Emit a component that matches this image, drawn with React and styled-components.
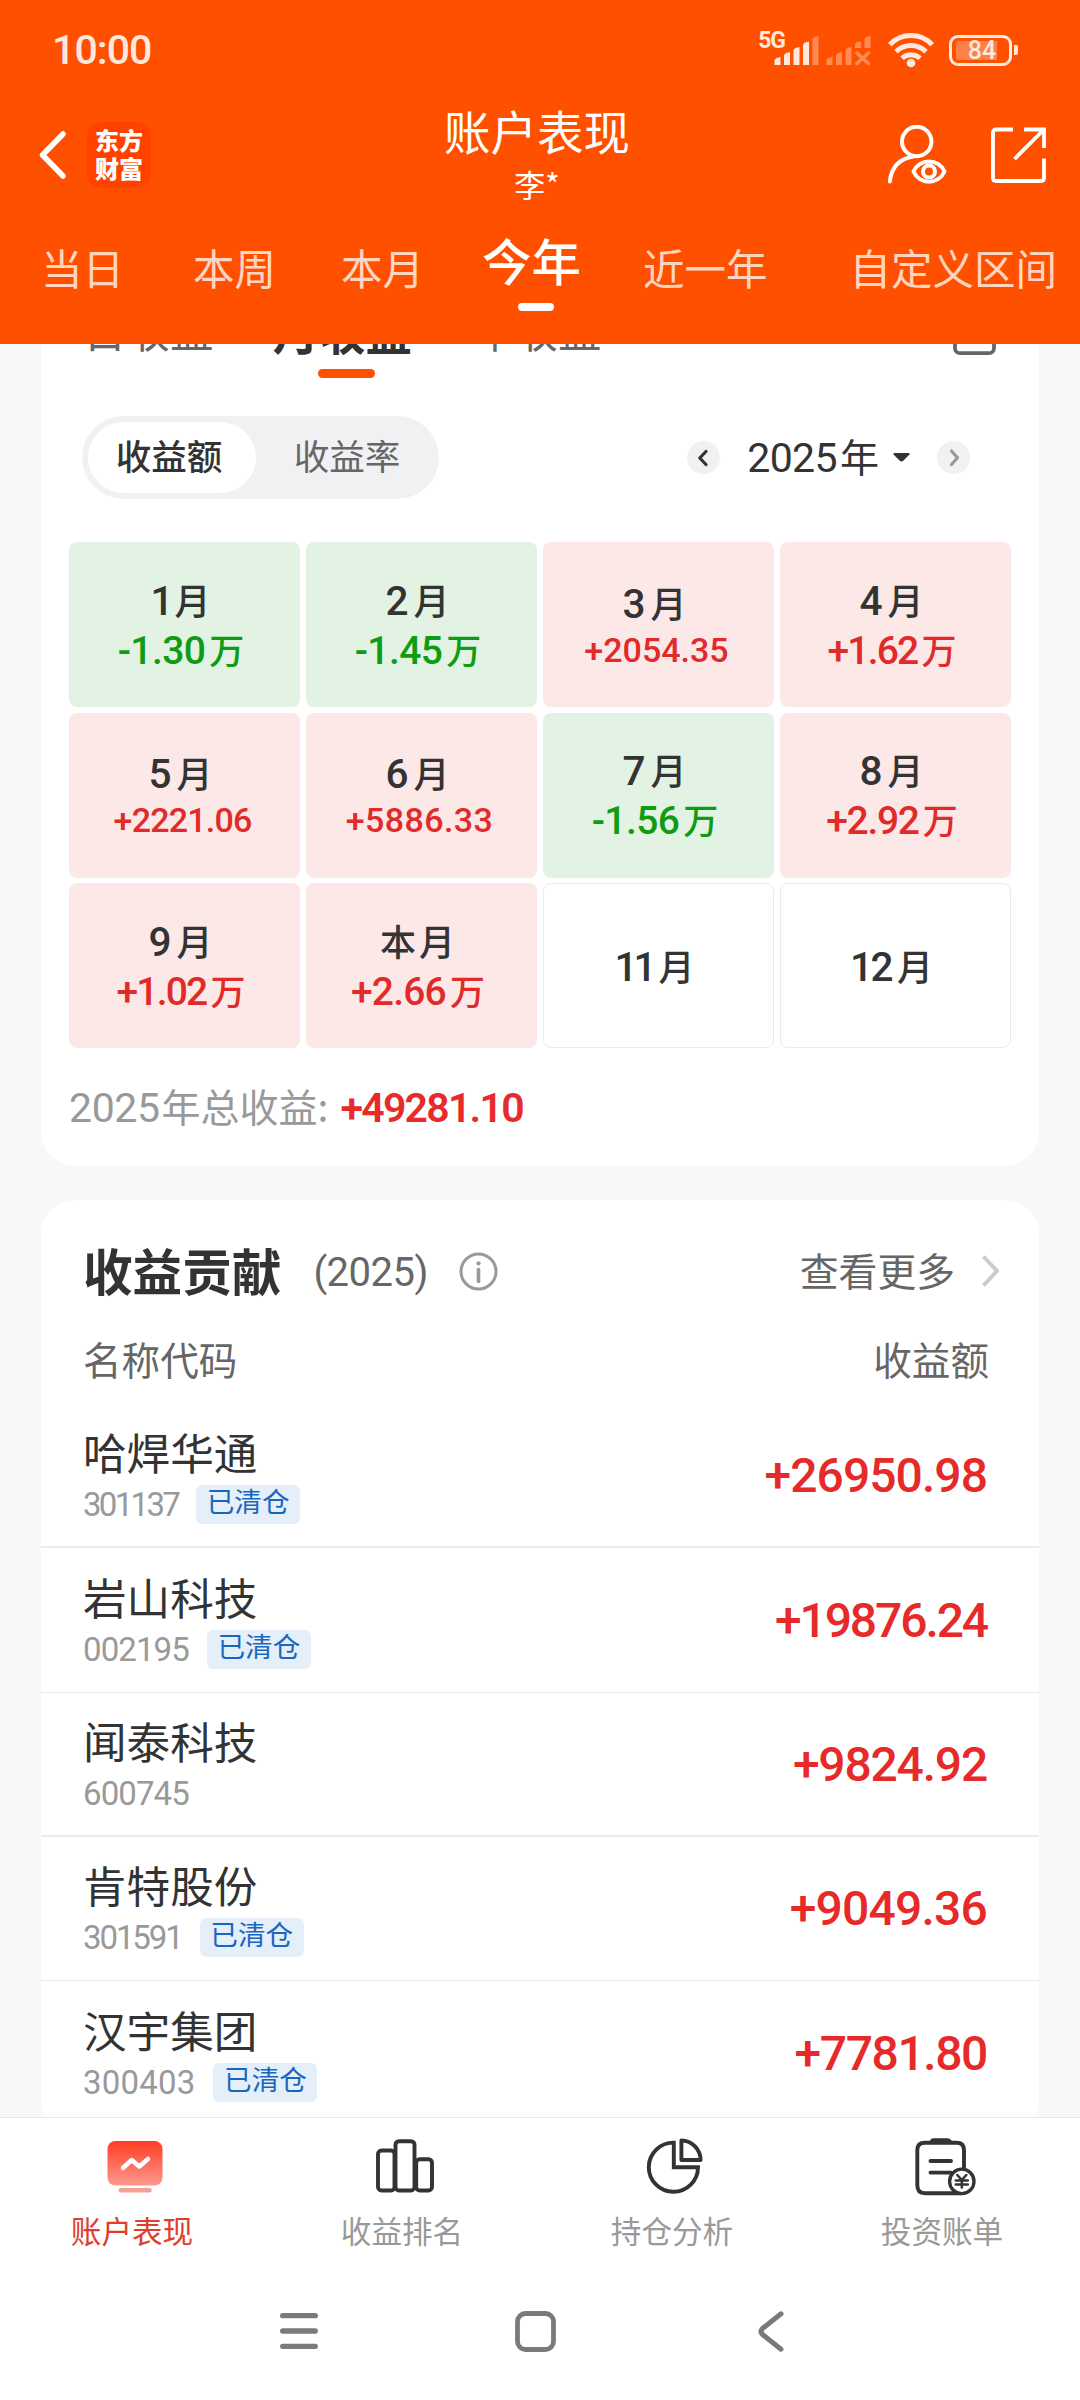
import React from "react";
import styled, { createGlobalStyle, css } from "styled-components";

const GlobalStyle = createGlobalStyle`
  *, *::before, *::after { box-sizing: border-box; }
  body { margin: 0; background: #fff; }
`;

const cjk = `"Noto Sans CJK SC", sans-serif`;
const latin = `Roboto, "Liberation Sans", sans-serif`;

const Screen = styled.div`
  width: 1080px;
  height: 2400px;
  display: flex;
  flex-direction: column;
  overflow: hidden;
  background: #f6f8fa;
  font-family: ${cjk};
  color: #333;
  white-space: nowrap;
  svg { display: block; flex: none; }
`;

const Num = styled.span`
  font-family: ${latin};
  font-size: ${(p) => p.$size}px;
  font-weight: ${(p) => p.$weight || 400};
  letter-spacing: ${(p) => p.$track || 0}px;
  line-height: 1;
`;

/* ---------- header ---------- */

const Header = styled.header`
  height: 344px;
  flex: none;
  background: #ff5000;
  color: #fff;
`;

const StatusBar = styled.div`
  height: 100px;
  display: flex;
  align-items: center;
  justify-content: space-between;
  padding: 0 62px 0 52px;
  color: #ffe8dc;
`;

const StatusIcons = styled.div`
  display: flex;
  align-items: center;
`;

const NetworkType = styled.span`
  font: 700 23px/22px ${latin};
  letter-spacing: -1px;
  margin: 0 -11px 18px 0;
`;

const WifiBox = styled.div`
  margin: 0 15px 0 17px;
`;

const BatteryBody = styled.div`
  width: 63px;
  height: 31px;
  border: 3px solid #ffe8dc;
  border-radius: 9px;
  padding: 3px 12px 3px 4px;
  display: flex;
  align-items: center;
  justify-content: center;
  background: rgba(255, 255, 255, 0.28) content-box;
`;

const BatteryLevel = styled.span`
  font: 500 25px/25px ${latin};
  margin-right: -11px;
`;

const BatteryTip = styled.div`
  width: 4px;
  height: 10px;
  margin-left: 2px;
  border-radius: 0 2px 2px 0;
  background: #ffe8dc;
`;

const NavBar = styled.div`
  height: 110px;
  display: flex;
  align-items: center;
`;

const NavLeft = styled.div`
  width: 240px;
  padding-left: 39px;
  display: flex;
  align-items: center;
  gap: 21px;
`;

const Logo = styled.div`
  width: 64px;
  height: 66px;
  border-radius: 14px;
  background: #ff4200;
  display: flex;
  flex-direction: column;
  align-items: center;
  justify-content: center;
  padding-bottom: 2px;
  font-weight: 900;
  font-size: 24px;
  line-height: 28px;
`;

const NavTitle = styled.div`
  flex: 1;
  display: flex;
  flex-direction: column;
  align-items: center;
  gap: 2px;
`;

const Title = styled.div`
  font-size: 46.5px;
  line-height: 56px;
`;

const Subtitle = styled.div`
  font-size: 31px;
  line-height: 48px;
`;

const NavRight = styled.div`
  width: 246px;
  padding-right: 34px;
  display: flex;
  align-items: center;
  justify-content: flex-end;
  gap: 44px;
`;

const PeriodTabs = styled.div`
  height: 134px;
  display: flex;
  align-items: flex-start;
  padding-left: 41px;
`;

const PeriodTab = styled.div`
  margin-left: ${(p) => p.$gap}px;
  margin-top: ${(p) => (p.$active ? 22 : 32)}px;
  font-size: ${(p) => (p.$active ? 49.5 : 41.5)}px;
  line-height: ${(p) => (p.$active ? 56 : 50)}px;
  font-weight: ${(p) => (p.$active ? 500 : 400)};
  color: ${(p) => (p.$active ? "#fff" : "#ffd5c0")};
`;

const Underline = styled.div`
  width: ${(p) => p.$w}px;
  height: ${(p) => p.$h}px;
  margin: ${(p) => p.$top}px 0 0 ${(p) => p.$left}px;
  border-radius: 5px;
  background: ${(p) => p.$color};
`;

/* ---------- scroll area ---------- */

const Content = styled.main`
  flex: 1;
  min-height: 0;
  overflow: hidden;
  padding: 0 41px;
`;

const Card = styled.section`
  background: #fff;
  border-radius: 34px;
`;

const CalendarCard = styled(Card)`
  margin-top: -56px;
  padding-bottom: 36px;
`;

const ModeTabs = styled.div`
  height: 90px;
  display: flex;
  align-items: flex-start;
  gap: 59px;
  padding: 17px 43px 0 42px;
`;

const ModeTab = styled.div`
  font-size: ${(p) => (p.$active ? 46.5 : 43.5)}px;
  line-height: 50px;
  font-weight: ${(p) => (p.$active ? 700 : 400)};
  color: ${(p) => (p.$active ? "#333" : "#666")};
`;

const CalendarIcon = styled.div`
  margin: 7px 0 0 auto;
`;

const Controls = styled.div`
  height: 83px;
  margin-top: 38px;
  padding: 0 69px 0 41px;
  display: flex;
  align-items: center;
  justify-content: space-between;
`;

const Segmented = styled.div`
  width: 357px;
  height: 83px;
  padding: 6px;
  border-radius: 42px;
  background: #f1f1f4;
  display: flex;
`;

const Segment = styled.div`
  flex: ${(p) => (p.$active ? "0 0 168px" : "1")};
  border-radius: 36px;
  display: flex;
  align-items: center;
  justify-content: center;
  padding: ${(p) => (p.$active ? "0 6px 6px 0" : "0 0 6px 5px")};
  font-size: 35.6px;
  font-weight: ${(p) => (p.$active ? 500 : 400)};
  color: ${(p) => (p.$active ? "#333" : "#666")};
  background: ${(p) => (p.$active ? "#fff" : "transparent")};
`;

const YearPicker = styled.div`
  display: flex;
  align-items: center;
`;

const RoundButton = styled.div`
  width: 33px;
  height: 33px;
  border-radius: 50%;
  background: #f1f1f4;
  display: flex;
  align-items: center;
  justify-content: center;
`;

const YearText = styled.div`
  margin: 0 14px 6px 27px;
  font-size: 39px;
  line-height: 50px;
`;

const CaretBox = styled.div`
  margin-right: 27px;
`;

const MonthGrid = styled.div`
  margin-top: 43px;
  padding: 0 28px;
  display: grid;
  grid-template-columns: repeat(4, 1fr);
  grid-auto-rows: 165px;
  gap: 5.5px 6px;
`;

const tones = {
  up: css`background: #fce8e7; color: #e12a2a;`,
  down: css`background: #e2f3e4; color: #0f9b12;`,
  none: css`background: #fff; border: 1px solid #ebebeb;`,
};

const MonthCell = styled.div`
  border-radius: 8px;
  display: flex;
  flex-direction: column;
  align-items: center;
  justify-content: center;
  padding-bottom: 2px;
  ${(p) => tones[p.$tone]}
`;

const MonthLabel = styled.div`
  font-size: 36px;
  line-height: 50px;
  font-weight: 500;
  color: #333;
  padding-right: 8px;
`;

const MonthAmount = styled.div`
  font-size: ${(p) => (p.$wan ? 35 : 31)}px;
  line-height: ${(p) => (p.$wan ? 50 : 44)}px;
  font-weight: 500;
  padding-right: ${(p) => (p.$wan ? 7 : 4)}px;
`;

const TotalRow = styled.div`
  margin-top: 32px;
  padding-left: 28px;
  font-size: 39px;
  line-height: 50px;
  color: #999;
`;

const TotalValue = styled.span`
  color: #e82a2a;
  margin-left: 12px;
`;

const Spaced = styled.span`
  margin-left: ${(p) => p.$x}px;
`;

/* ---------- contribution list ---------- */

const ContributionCard = styled(Card)`
  margin-top: 34px;
  padding-bottom: 9px;
`;

const CardHead = styled.div`
  height: 137px;
  display: flex;
  align-items: center;
  padding: 0 40px 0 42px;
`;

const CardTitle = styled.h2`
  margin: 0;
  font-size: 49.6px;
  line-height: 56px;
  font-weight: 700;
`;

const CardYear = styled.div`
  display: flex;
  margin-left: 32px;
  padding-top: 9px;
  color: #666;
`;

const InfoBox = styled.div`
  margin: 6px 0 0 31px;
`;

const More = styled.div`
  margin-left: auto;
  display: flex;
  align-items: center;
  gap: 27px;
  padding-top: 4px;
  font-size: 38.8px;
  line-height: 44px;
  color: #666;
`;

const MoreText = styled.span`
  padding-bottom: 3px;
`;

const ColumnHead = styled.div`
  display: flex;
  justify-content: space-between;
  height: 67px;
  padding: 0 50px 0 42px;
  font-size: 38.6px;
  line-height: 42px;
  color: #666;
`;

const StockRow = styled.div`
  height: 144.25px;
  display: flex;
  align-items: center;
  justify-content: space-between;
  padding: 0 52px 0 42px;
  border-bottom: ${(p) => p.$line}px solid #ececec;
`;

const StockName = styled.div`
  font-size: 43.6px;
  line-height: 50px;
`;

const StockMeta = styled.div`
  margin-top: 9px;
  height: 39px;
  display: flex;
  align-items: center;
  gap: 18px;
  color: #999;
`;

const Badge = styled.span`
  width: 104px;
  height: 39px;
  border-radius: 6px;
  background: #e4effa;
  color: #1a66bf;
  font-size: 27.6px;
  line-height: 31px;
  text-align: center;
`;

const StockAmount = styled.div`
  display: flex;
  padding-top: 2px;
  color: #e62a2a;
`;

/* ---------- bottom bars ---------- */

const TabBar = styled.nav`
  height: 145px;
  flex: none;
  display: grid;
  grid-template-columns: repeat(4, 1fr);
  background: #fff;
  border-top: 1px solid #e9e9e9;
`;

const TabItem = styled.div`
  display: flex;
  flex-direction: column;
  align-items: center;
  padding-top: 19px;
  color: ${(p) => (p.$active ? "#df3f2a" : "#999")};
`;

const TabLabel = styled.div`
  margin: 13px 6px 0 0;
  font-size: 30.6px;
  line-height: 40px;
`;

const SystemNav = styled.div`
  height: 138px;
  flex: none;
  display: flex;
  align-items: center;
  padding-left: 280px;
  background: #fff;
`;

const SystemKey = styled.div`
  margin-left: ${(p) => p.$gap}px;
`;

/* ---------- drawings ---------- */

const bar = (x, top) => `M${x} 30V${top + 3}L${x + 2} ${top + 1}L${x + 6} ${top}V30Z`;

const Signals = () => (
  <svg width="97" height="31" viewBox="0 0 97 31" fill="#ffe8dc">
    <path d={bar(0.5, 22)} />
    <path d={bar(10, 17)} />
    <path d={bar(19.5, 12)} />
    <path d={bar(29, 6.5)} />
    <g opacity="0.38">
      <path d={bar(38.5, 1)} />
      <path d={bar(52.5, 22)} />
      <path d={bar(62, 17)} />
      <path d={bar(71.5, 12)} />
      <path d="M81 13V9L83 7L87 6.5V13Z" />
      <path d="M90.5 13V4L92.5 2L96.5 1V13Z" />
      <path d="M83 18L94.5 28.5M94.5 18L83 28.5" stroke="#ffe8dc" strokeWidth="3.6" strokeLinecap="round" />
    </g>
  </svg>
);

const Wifi = () => (
  <svg width="46" height="35" viewBox="0 0 46 35" fill="none" stroke="#ffe8dc" strokeWidth="5">
    <path d="M1.8 11.8A29 29 0 0 1 44.2 11.8" />
    <path d="M8 18.8A21 21 0 0 1 38 18.8" />
    <path d="M14 25.3A13 13 0 0 1 32 25.3" />
    <circle cx="23" cy="30" r="4.3" fill="#ffe8dc" stroke="none" />
  </svg>
);

const BackIcon = () => (
  <svg width="27" height="48" viewBox="0 0 27 48" fill="none" stroke="#fff" strokeWidth="5.5" strokeLinecap="round" strokeLinejoin="round">
    <path d="M24 3L3.5 24L24 45" />
  </svg>
);

const UserEyeIcon = () => (
  <svg width="60" height="60" viewBox="0 0 60 60" fill="none" stroke="#fff" strokeWidth="4" strokeLinecap="round">
    <circle cx="29.7" cy="16.5" r="14.7" />
    <path d="M2.8 56.5C4.5 42 13 33.5 26.5 31.5" />
    <path d="M26.5 46.5C32.5 33 51.5 33 57.5 46.5C51.5 60 32.5 60 26.5 46.5Z" strokeLinejoin="round" />
    <circle cx="42" cy="46.5" r="6" />
  </svg>
);

const ShareIcon = () => (
  <svg width="55" height="56" viewBox="0 0 55 56" fill="none" stroke="#fff" strokeWidth="3.8">
    <path d="M22 2.5H5Q2 2.5 2 5.5V51Q2 54 5 54H50Q53 54 53 51V31.5" />
    <path d="M33 2.5H53V21" />
    <path d="M52.5 3L23.5 32" />
  </svg>
);

const CalendarGlyph = () => (
  <svg width="43" height="44" viewBox="0 0 43 44" fill="none" stroke="#666" strokeWidth="3.8">
    <rect x="2" y="4" width="39" height="37.2" rx="5" />
    <path d="M2 14H41" />
  </svg>
);

const SmallChevron = ({ right, color }) => (
  <svg width="33" height="33" viewBox="0 0 33 33" fill="none" stroke={color} strokeWidth="3.2" strokeLinecap="round" strokeLinejoin="round">
    <path d={right ? "M14.5 10L20.5 16.8L14.5 23.5" : "M19 10.5L12.8 17L19 23.5"} />
  </svg>
);

const Caret = () => (
  <svg width="17" height="9" viewBox="0 0 17 9" fill="#333">
    <path d="M1.5 0H15.5Q17.5 0.5 16 2L10.5 7.5Q8.5 9.3 6.5 7.5L1 2Q-0.5 0.5 1.5 0Z" />
  </svg>
);

const InfoIcon = () => (
  <svg width="39" height="39" viewBox="0 0 39 39" fill="none" stroke="#999" strokeWidth="3">
    <circle cx="19.5" cy="19.5" r="17.5" />
    <path d="M19.5 17.5V29.5" strokeLinecap="round" strokeWidth="3.6" />
    <circle cx="19.5" cy="11.3" r="2.1" fill="#999" stroke="none" />
  </svg>
);

const MoreChevron = () => (
  <svg width="17" height="32" viewBox="0 0 17 32" fill="none" stroke="#ccc" strokeWidth="4">
    <path d="M1.5 1.5L15 16L1.5 30.5" />
  </svg>
);

const MonitorIcon = () => (
  <svg width="60" height="60" viewBox="0 0 60 60" fill="none">
    <defs>
      <linearGradient id="screen" x1="0" y1="0" x2="0" y2="1">
        <stop offset="0" stopColor="#ff3c22" />
        <stop offset="1" stopColor="#fd9a8f" />
      </linearGradient>
    </defs>
    <rect x="2.5" y="4" width="55" height="44.5" rx="8" fill="url(#screen)" />
    <path d="M18 31L26.7 23L34.3 29.5L43 22" stroke="#fff" strokeWidth="4.5" strokeLinecap="round" strokeLinejoin="round" />
    <rect x="13.7" y="51" width="33" height="4.6" rx="2" fill="#f6a195" />
  </svg>
);

const RankIcon = () => (
  <svg width="60" height="60" viewBox="0 0 60 60" fill="none" stroke="#333" strokeWidth="3.9">
    <rect x="3" y="13.5" width="16.5" height="40" rx="3.5" />
    <rect x="20.5" y="4.2" width="19" height="49.3" rx="3.5" />
    <rect x="41.2" y="22.2" width="15.8" height="31.3" rx="3.5" />
  </svg>
);

const PieIcon = () => (
  <svg width="60" height="60" viewBox="0 0 60 60" fill="none" stroke="#333" strokeWidth="3.9">
    <path d="M28.8 5.6A24.6 24.6 0 1 0 53 30.2H28.8Z" />
    <path d="M36.4 3.5A19.5 19.5 0 0 1 55.6 23H36.4Z" strokeLinejoin="round" />
  </svg>
);

const BillIcon = () => (
  <svg width="62" height="60" viewBox="-1 0 62 60" fill="none" stroke="#333" strokeWidth="3.9" strokeLinecap="round">
    <path d="M49 31V13Q49 5.7 41.5 5.7H10Q2.3 5.7 2.3 13V48Q2.3 56.3 10 56.3H46" />
    <path d="M15 3.5Q16 1.2 18.5 1.2H32.5Q35 1.2 36.5 3.5V6H15Z" fill="#333" stroke="none" />
    <path d="M15.5 24H36M15.5 35.6H36" />
    <circle cx="46.8" cy="44.4" r="12.2" fill="#fff" strokeWidth="3.3" />
    <path d="M42.3 38L46.8 43L51.3 38M46.8 43V50.5M40.8 43.5H52.8M40.8 47.5H52.8" strokeWidth="2.5" />
  </svg>
);

const MenuKey = () => (
  <svg width="38" height="40" viewBox="0 0 38 40" stroke="#7a7a7a" strokeWidth="5.3" strokeLinecap="round">
    <path d="M2.7 4.7H35.3M2.7 20H35.3M2.7 35.3H35.3" />
  </svg>
);

const HomeKey = () => (
  <svg width="41" height="41" viewBox="0 0 41 41" fill="none" stroke="#7a7a7a" strokeWidth="4.8">
    <rect x="2.5" y="2.5" width="36" height="36" rx="8" />
  </svg>
);

const ReturnKey = () => (
  <svg width="26" height="41" viewBox="0 0 26 41" fill="none" stroke="#7a7a7a" strokeWidth="5" strokeLinecap="round" strokeLinejoin="round">
    <path d="M23 2.8L4.5 17.5Q1.5 20.5 4.5 23.5L23 38.2" />
  </svg>
);

/* ---------- data ---------- */

const periods = [
  { text: "当日", gap: 0 },
  { text: "本周", gap: 69 },
  { text: "本月", gap: 65 },
  { text: "今年", gap: 58, active: true },
  { text: "近一年", gap: 62 },
  { text: "自定义区间", gap: 82 },
];

const months = [
  { n: "1", gap: 2, amount: "-1.30", wan: true, tone: "down", track: -0.6 },
  { n: "2", amount: "-1.45", wan: true, tone: "down", track: -0.6 },
  { n: "3", amount: "+2054.35", tone: "up" },
  { n: "4", amount: "+1.62", wan: true, tone: "up", track: -1.8 },
  { n: "5", amount: "+2221.06", tone: "up", track: -0.8 },
  { n: "6", amount: "+5886.33", tone: "up", track: 0.4 },
  { n: "7", amount: "-1.56", wan: true, tone: "down", track: -0.6 },
  { n: "8", amount: "+2.92", wan: true, tone: "up", track: -1.3 },
  { n: "9", amount: "+1.02", wan: true, tone: "up", track: -1.8 },
  { n: "本", amount: "+2.66", wan: true, tone: "up", track: -0.8 },
  { n: "11", tone: "none", numTrack: -4 },
  { n: "12", tone: "none", numTrack: -2.6 },
];

const stocks = [
  { name: "哈焊华通", code: "301137", codeTrack: -2.7, cleared: true, amount: "+26950.98", track: -0.95 },
  { name: "岩山科技", code: "002195", codeTrack: -0.9, cleared: true, amount: "+19876.24", track: -2.1 },
  { name: "闻泰科技", code: "600745", codeTrack: -0.9, amount: "+9824.92", track: -1.2 },
  { name: "肯特股份", code: "301591", codeTrack: -2.1, cleared: true, amount: "+9049.36", track: -0.8 },
  { name: "汉宇集团", code: "300403", codeTrack: 0.2, cleared: true, amount: "+7781.80", track: -1.4 },
];

const tabs = [
  { label: "账户表现", Icon: MonitorIcon, active: true },
  { label: "收益排名", Icon: RankIcon },
  { label: "持仓分析", Icon: PieIcon },
  { label: "投资账单", Icon: BillIcon },
];

const Month = ({ n, gap = 6, numTrack = -0.8, amount, wan, tone, track }) => (
  <MonthCell $tone={tone}>
    <MonthLabel>
      {n === "本" ? n : <Num $size={40.5} $weight={500} $track={numTrack}>{n}</Num>}
      <Spaced $x={n === "本" ? 3 : gap}>月</Spaced>
    </MonthLabel>
    {amount && (
      <MonthAmount $wan={wan}>
        <Num $size={wan ? 39 : 34} $weight={500} $track={track}>{amount}</Num>
        {wan && <Spaced $x={4}>万</Spaced>}
      </MonthAmount>
    )}
  </MonthCell>
);

export default function App() {
  return (
    <Screen>
      <GlobalStyle />
      <Header>
        <StatusBar>
          <Num $size={41} $weight={500} $track={-0.9}>10:00</Num>
          <StatusIcons>
            <NetworkType>5G</NetworkType>
            <Signals />
            <WifiBox><Wifi /></WifiBox>
            <BatteryBody><BatteryLevel>84</BatteryLevel></BatteryBody>
            <BatteryTip />
          </StatusIcons>
        </StatusBar>
        <NavBar>
          <NavLeft>
            <BackIcon />
            <Logo><span>东方</span><span>财富</span></Logo>
          </NavLeft>
          <NavTitle>
            <Title>账户表现</Title>
            <Subtitle>李*</Subtitle>
          </NavTitle>
          <NavRight>
            <UserEyeIcon />
            <ShareIcon />
          </NavRight>
        </NavBar>
        <PeriodTabs>
          {periods.map((p) => (
            <PeriodTab key={p.text} $gap={p.gap} $active={p.active}>
              {p.text}
              {p.active && <Underline $w={36} $h={8} $top={15} $left={36} $color="#fff" />}
            </PeriodTab>
          ))}
        </PeriodTabs>
      </Header>

      <Content>
        <CalendarCard>
          <ModeTabs>
            <ModeTab>日收益</ModeTab>
            <ModeTab $active>
              月收益
              <Underline $w={57} $h={9} $top={14} $left={45} $color="#ff5000" />
            </ModeTab>
            <ModeTab>年收益</ModeTab>
            <CalendarIcon><CalendarGlyph /></CalendarIcon>
          </ModeTabs>
          <Controls>
            <Segmented>
              <Segment $active>收益额</Segment>
              <Segment>收益率</Segment>
            </Segmented>
            <YearPicker>
              <RoundButton><SmallChevron color="#333" /></RoundButton>
              <YearText>
                <Num $size={41} $track={-0.6}>2025</Num>
                <Spaced $x={3}>年</Spaced>
              </YearText>
              <CaretBox><Caret /></CaretBox>
              <RoundButton><SmallChevron right color="#999" /></RoundButton>
            </YearPicker>
          </Controls>
          <MonthGrid>
            {months.map((m) => <Month key={m.n} {...m} />)}
          </MonthGrid>
          <TotalRow>
            <Num $size={41} $track={-0.4}>2025</Num>
            <Spaced $x={2}>年总收益:</Spaced>
            <TotalValue><Num $size={41} $weight={600} $track={-1.75}>+49281.10</Num></TotalValue>
          </TotalRow>
        </CalendarCard>

        <ContributionCard>
          <CardHead>
            <CardTitle>收益贡献</CardTitle>
            <CardYear><Num $size={40} $track={-0.5}>(2025)</Num></CardYear>
            <InfoBox><InfoIcon /></InfoBox>
            <More><MoreText>查看更多</MoreText><MoreChevron /></More>
          </CardHead>
          <ColumnHead>
            <span>名称代码</span>
            <span>收益额</span>
          </ColumnHead>
          {stocks.map((s, i) => (
            <StockRow key={s.code} $line={i === 4 ? 0 : i % 2 ? 1 : 2}>
              <div>
                <StockName>{s.name}</StockName>
                <StockMeta>
                  <Num $size={33} $track={s.codeTrack}>{s.code}</Num>
                  {s.cleared && <Badge>已清仓</Badge>}
                </StockMeta>
              </div>
              <StockAmount>
                <Num $size={48} $weight={500} $track={s.track}>{s.amount}</Num>
              </StockAmount>
            </StockRow>
          ))}
        </ContributionCard>
      </Content>

      <TabBar>
        {tabs.map(({ label, Icon, active }) => (
          <TabItem key={label} $active={active}>
            <Icon />
            <TabLabel>{label}</TabLabel>
          </TabItem>
        ))}
      </TabBar>
      <SystemNav>
        <SystemKey $gap={0}><MenuKey /></SystemKey>
        <SystemKey $gap={197}><HomeKey /></SystemKey>
        <SystemKey $gap={202}><ReturnKey /></SystemKey>
      </SystemNav>
    </Screen>
  );
}
